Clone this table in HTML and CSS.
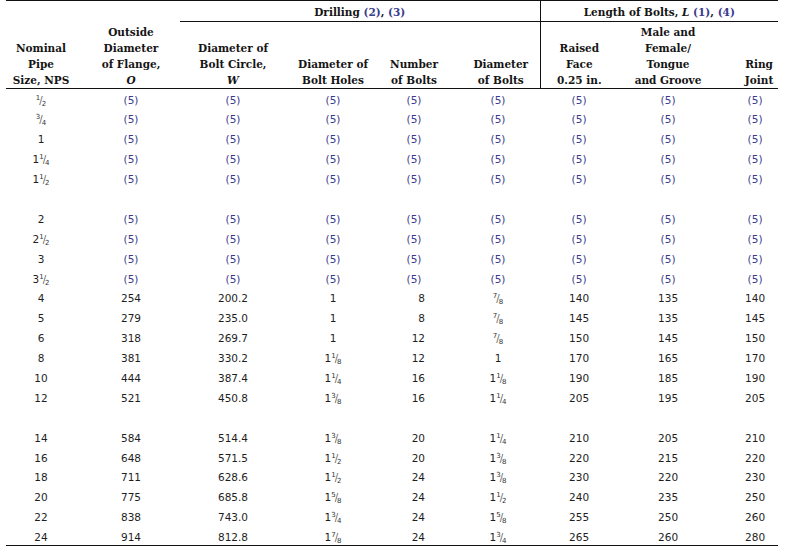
FILE: index.html
```html
<!DOCTYPE html>
<html>
<head>
<meta charset="utf-8">
<link rel="stylesheet" href="styles.css">
</head>
<body>
<table class="flange">
  <colgroup>
    <col class="c1"><col class="c2"><col class="c3"><col class="c4"><col class="c5"><col class="c6"><col class="c7"><col class="c8"><col class="c9">
  </colgroup>
  <thead>
    <tr class="grp-row">
      <th colspan="2" class="empty"></th>
      <th colspan="4" class="grp">Drilling <span class="ref">(2)</span>, <span class="ref">(3)</span></th>
      <th colspan="3" class="grp len">Length of Bolts, <i>L</i> <span class="ref">(1)</span>, <span class="ref">(4)</span></th>
    </tr>
    <tr class="col-row">
      <th class="k1">Nominal<br>Pipe<br>Size, NPS</th>
      <th class="k2">Outside<br>Diameter<br>of Flange,<br><i>O</i></th>
      <th>Diameter of<br>Bolt Circle,<br><i>W</i></th>
      <th>Diameter of<br>Bolt Holes</th>
      <th class="k5">Number<br>of Bolts</th>
      <th class="k6">Diameter<br>of Bolts</th>
      <th class="len">Raised<br>Face<br>0.25 in.</th>
      <th>Male and<br>Female/<br>Tongue<br>and Groove</th>
      <th class="k9">Ring<br>Joint</th>
    </tr>
  </thead>
  <tbody>
    <tr><td class="k1"><span class="f"><sup>1</sup><span class="s">/</span><sub>2</sub></span></td><td class="k2 n">(5)</td><td class="n">(5)</td><td class="n">(5)</td><td class="k5n n">(5)</td><td class="n">(5)</td><td class="n">(5)</td><td class="n">(5)</td><td class="k9 n">(5)</td></tr>
    <tr><td class="k1"><span class="f"><sup>3</sup><span class="s">/</span><sub>4</sub></span></td><td class="k2 n">(5)</td><td class="n">(5)</td><td class="n">(5)</td><td class="k5n n">(5)</td><td class="n">(5)</td><td class="n">(5)</td><td class="n">(5)</td><td class="k9 n">(5)</td></tr>
    <tr><td class="k1">1</td><td class="k2 n">(5)</td><td class="n">(5)</td><td class="n">(5)</td><td class="k5n n">(5)</td><td class="n">(5)</td><td class="n">(5)</td><td class="n">(5)</td><td class="k9 n">(5)</td></tr>
    <tr><td class="k1">1<span class="f"><sup>1</sup><span class="s">/</span><sub>4</sub></span></td><td class="k2 n">(5)</td><td class="n">(5)</td><td class="n">(5)</td><td class="k5n n">(5)</td><td class="n">(5)</td><td class="n">(5)</td><td class="n">(5)</td><td class="k9 n">(5)</td></tr>
    <tr><td class="k1">1<span class="f"><sup>1</sup><span class="s">/</span><sub>2</sub></span></td><td class="k2 n">(5)</td><td class="n">(5)</td><td class="n">(5)</td><td class="k5n n">(5)</td><td class="n">(5)</td><td class="n">(5)</td><td class="n">(5)</td><td class="k9 n">(5)</td></tr>
    <tr class="gap"><td colspan="9"></td></tr>
    <tr><td class="k1">2</td><td class="k2 n">(5)</td><td class="n">(5)</td><td class="n">(5)</td><td class="k5n n">(5)</td><td class="n">(5)</td><td class="n">(5)</td><td class="n">(5)</td><td class="k9 n">(5)</td></tr>
    <tr><td class="k1">2<span class="f"><sup>1</sup><span class="s">/</span><sub>2</sub></span></td><td class="k2 n">(5)</td><td class="n">(5)</td><td class="n">(5)</td><td class="k5n n">(5)</td><td class="n">(5)</td><td class="n">(5)</td><td class="n">(5)</td><td class="k9 n">(5)</td></tr>
    <tr><td class="k1">3</td><td class="k2 n">(5)</td><td class="n">(5)</td><td class="n">(5)</td><td class="k5n n">(5)</td><td class="n">(5)</td><td class="n">(5)</td><td class="n">(5)</td><td class="k9 n">(5)</td></tr>
    <tr><td class="k1">3<span class="f"><sup>1</sup><span class="s">/</span><sub>2</sub></span></td><td class="k2 n">(5)</td><td class="n">(5)</td><td class="n">(5)</td><td class="k5n n">(5)</td><td class="n">(5)</td><td class="n">(5)</td><td class="n">(5)</td><td class="k9 n">(5)</td></tr>
    <tr><td class="k1">4</td><td class="k2">254</td><td>200.2</td><td>1</td><td class="k5">8</td><td><span class="f"><sup>7</sup><span class="s">/</span><sub>8</sub></span></td><td>140</td><td>135</td><td class="k9">140</td></tr>
    <tr><td class="k1">5</td><td class="k2">279</td><td>235.0</td><td>1</td><td class="k5">8</td><td><span class="f"><sup>7</sup><span class="s">/</span><sub>8</sub></span></td><td>145</td><td>135</td><td class="k9">145</td></tr>
    <tr><td class="k1">6</td><td class="k2">318</td><td>269.7</td><td>1</td><td class="k5">12</td><td><span class="f"><sup>7</sup><span class="s">/</span><sub>8</sub></span></td><td>150</td><td>145</td><td class="k9">150</td></tr>
    <tr><td class="k1">8</td><td class="k2">381</td><td>330.2</td><td>1<span class="f"><sup>1</sup><span class="s">/</span><sub>8</sub></span></td><td class="k5">12</td><td>1</td><td>170</td><td>165</td><td class="k9">170</td></tr>
    <tr><td class="k1">10</td><td class="k2">444</td><td>387.4</td><td>1<span class="f"><sup>1</sup><span class="s">/</span><sub>4</sub></span></td><td class="k5">16</td><td>1<span class="f"><sup>1</sup><span class="s">/</span><sub>8</sub></span></td><td>190</td><td>185</td><td class="k9">190</td></tr>
    <tr><td class="k1">12</td><td class="k2">521</td><td>450.8</td><td>1<span class="f"><sup>3</sup><span class="s">/</span><sub>8</sub></span></td><td class="k5">16</td><td>1<span class="f"><sup>1</sup><span class="s">/</span><sub>4</sub></span></td><td>205</td><td>195</td><td class="k9">205</td></tr>
    <tr class="gap"><td colspan="9"></td></tr>
    <tr><td class="k1">14</td><td class="k2">584</td><td>514.4</td><td>1<span class="f"><sup>3</sup><span class="s">/</span><sub>8</sub></span></td><td class="k5">20</td><td>1<span class="f"><sup>1</sup><span class="s">/</span><sub>4</sub></span></td><td>210</td><td>205</td><td class="k9">210</td></tr>
    <tr><td class="k1">16</td><td class="k2">648</td><td>571.5</td><td>1<span class="f"><sup>1</sup><span class="s">/</span><sub>2</sub></span></td><td class="k5">20</td><td>1<span class="f"><sup>3</sup><span class="s">/</span><sub>8</sub></span></td><td>220</td><td>215</td><td class="k9">220</td></tr>
    <tr><td class="k1">18</td><td class="k2">711</td><td>628.6</td><td>1<span class="f"><sup>1</sup><span class="s">/</span><sub>2</sub></span></td><td class="k5">24</td><td>1<span class="f"><sup>3</sup><span class="s">/</span><sub>8</sub></span></td><td>230</td><td>220</td><td class="k9">230</td></tr>
    <tr><td class="k1">20</td><td class="k2">775</td><td>685.8</td><td>1<span class="f"><sup>5</sup><span class="s">/</span><sub>8</sub></span></td><td class="k5">24</td><td>1<span class="f"><sup>1</sup><span class="s">/</span><sub>2</sub></span></td><td>240</td><td>235</td><td class="k9">250</td></tr>
    <tr><td class="k1">22</td><td class="k2">838</td><td>743.0</td><td>1<span class="f"><sup>3</sup><span class="s">/</span><sub>4</sub></span></td><td class="k5">24</td><td>1<span class="f"><sup>5</sup><span class="s">/</span><sub>8</sub></span></td><td>255</td><td>250</td><td class="k9">260</td></tr>
    <tr class="last"><td class="k1">24</td><td class="k2">914</td><td>812.8</td><td>1<span class="f"><sup>7</sup><span class="s">/</span><sub>8</sub></span></td><td class="k5">24</td><td>1<span class="f"><sup>3</sup><span class="s">/</span><sub>4</sub></span></td><td>265</td><td>260</td><td class="k9">280</td></tr>
  </tbody>
</table>
</body>
</html>
```

FILE: styles.css
```css
html, body {
  margin: 0;
  padding: 0;
  background: #ffffff;
}

.flange {
  margin-left: 6px;
  width: 772px;
  table-layout: fixed;
  border-collapse: collapse;
  border-top: 1px solid #111;
  border-bottom: 1px solid #111;
  color: #1a1a1a;
}

.c1 { width: 70px; }
.c2 { width: 104px; }
.c3 { width: 106px; }
.c4 { width: 94px; }
.c5 { width: 76px; }
.c6 { width: 84px; }
.c7 { width: 78px; }
.c8 { width: 100px; }
.c9 { width: 60px; }

th {
  font-family: "DejaVu Serif", serif;
  font-weight: bold;
  font-size: 10.5px;
  line-height: 16px;
  text-align: center;
  padding: 0;
  color: #151515;
}

.grp-row th {
  padding: 2px 0 1px;
  height: 17px;
  vertical-align: middle;
}

.grp-row .grp {
  border-bottom: 1px solid #111;
}

.grp-row .empty {
  border-bottom: none;
}

.len {
  border-left: 1px solid #111;
}

.ref {
  color: #3a3a8e;
}

.col-row th {
  vertical-align: bottom;
  height: 64px;
  padding: 2px 0 0;
  border-bottom: 1px solid #111;
}

.col-row .k2 { padding-left: 6px; }
.col-row .k5 { padding-right: 8px; }
.col-row .k6 { padding-left: 6px; }
.col-row .k9 { padding-left: 22px; }

tbody tr {
  height: 19.9px;
}

td {
  box-sizing: border-box;
  font-family: "DejaVu Sans", sans-serif;
  font-size: 10.5px;
  line-height: 16px;
  height: 19.9px;
  padding: 3px 0 0;
  text-align: center;
  vertical-align: top;
  color: #1e1e1e;
  overflow: hidden;
}

td.n {
  color: #3a3a8e;
}

td.k2 { padding-left: 6px; }
td.k5 { text-align: right; padding-right: 31px; }
td.k5n { padding-right: 8px; }
td.k9 { padding-left: 14px; }

.f {
  display: inline-block;
  height: 16px;
  white-space: nowrap;
  color: #333;
  vertical-align: top;
}

.f sup,
.f sub {
  font-size: 7px;
  line-height: 0;
  position: relative;
  vertical-align: baseline;
}

.f sup { top: -4px; }
.f sub { top: 2px; }

.f .s {
  font-size: 10px;
  color: #666;
  margin: 0 -1px;
}
```
